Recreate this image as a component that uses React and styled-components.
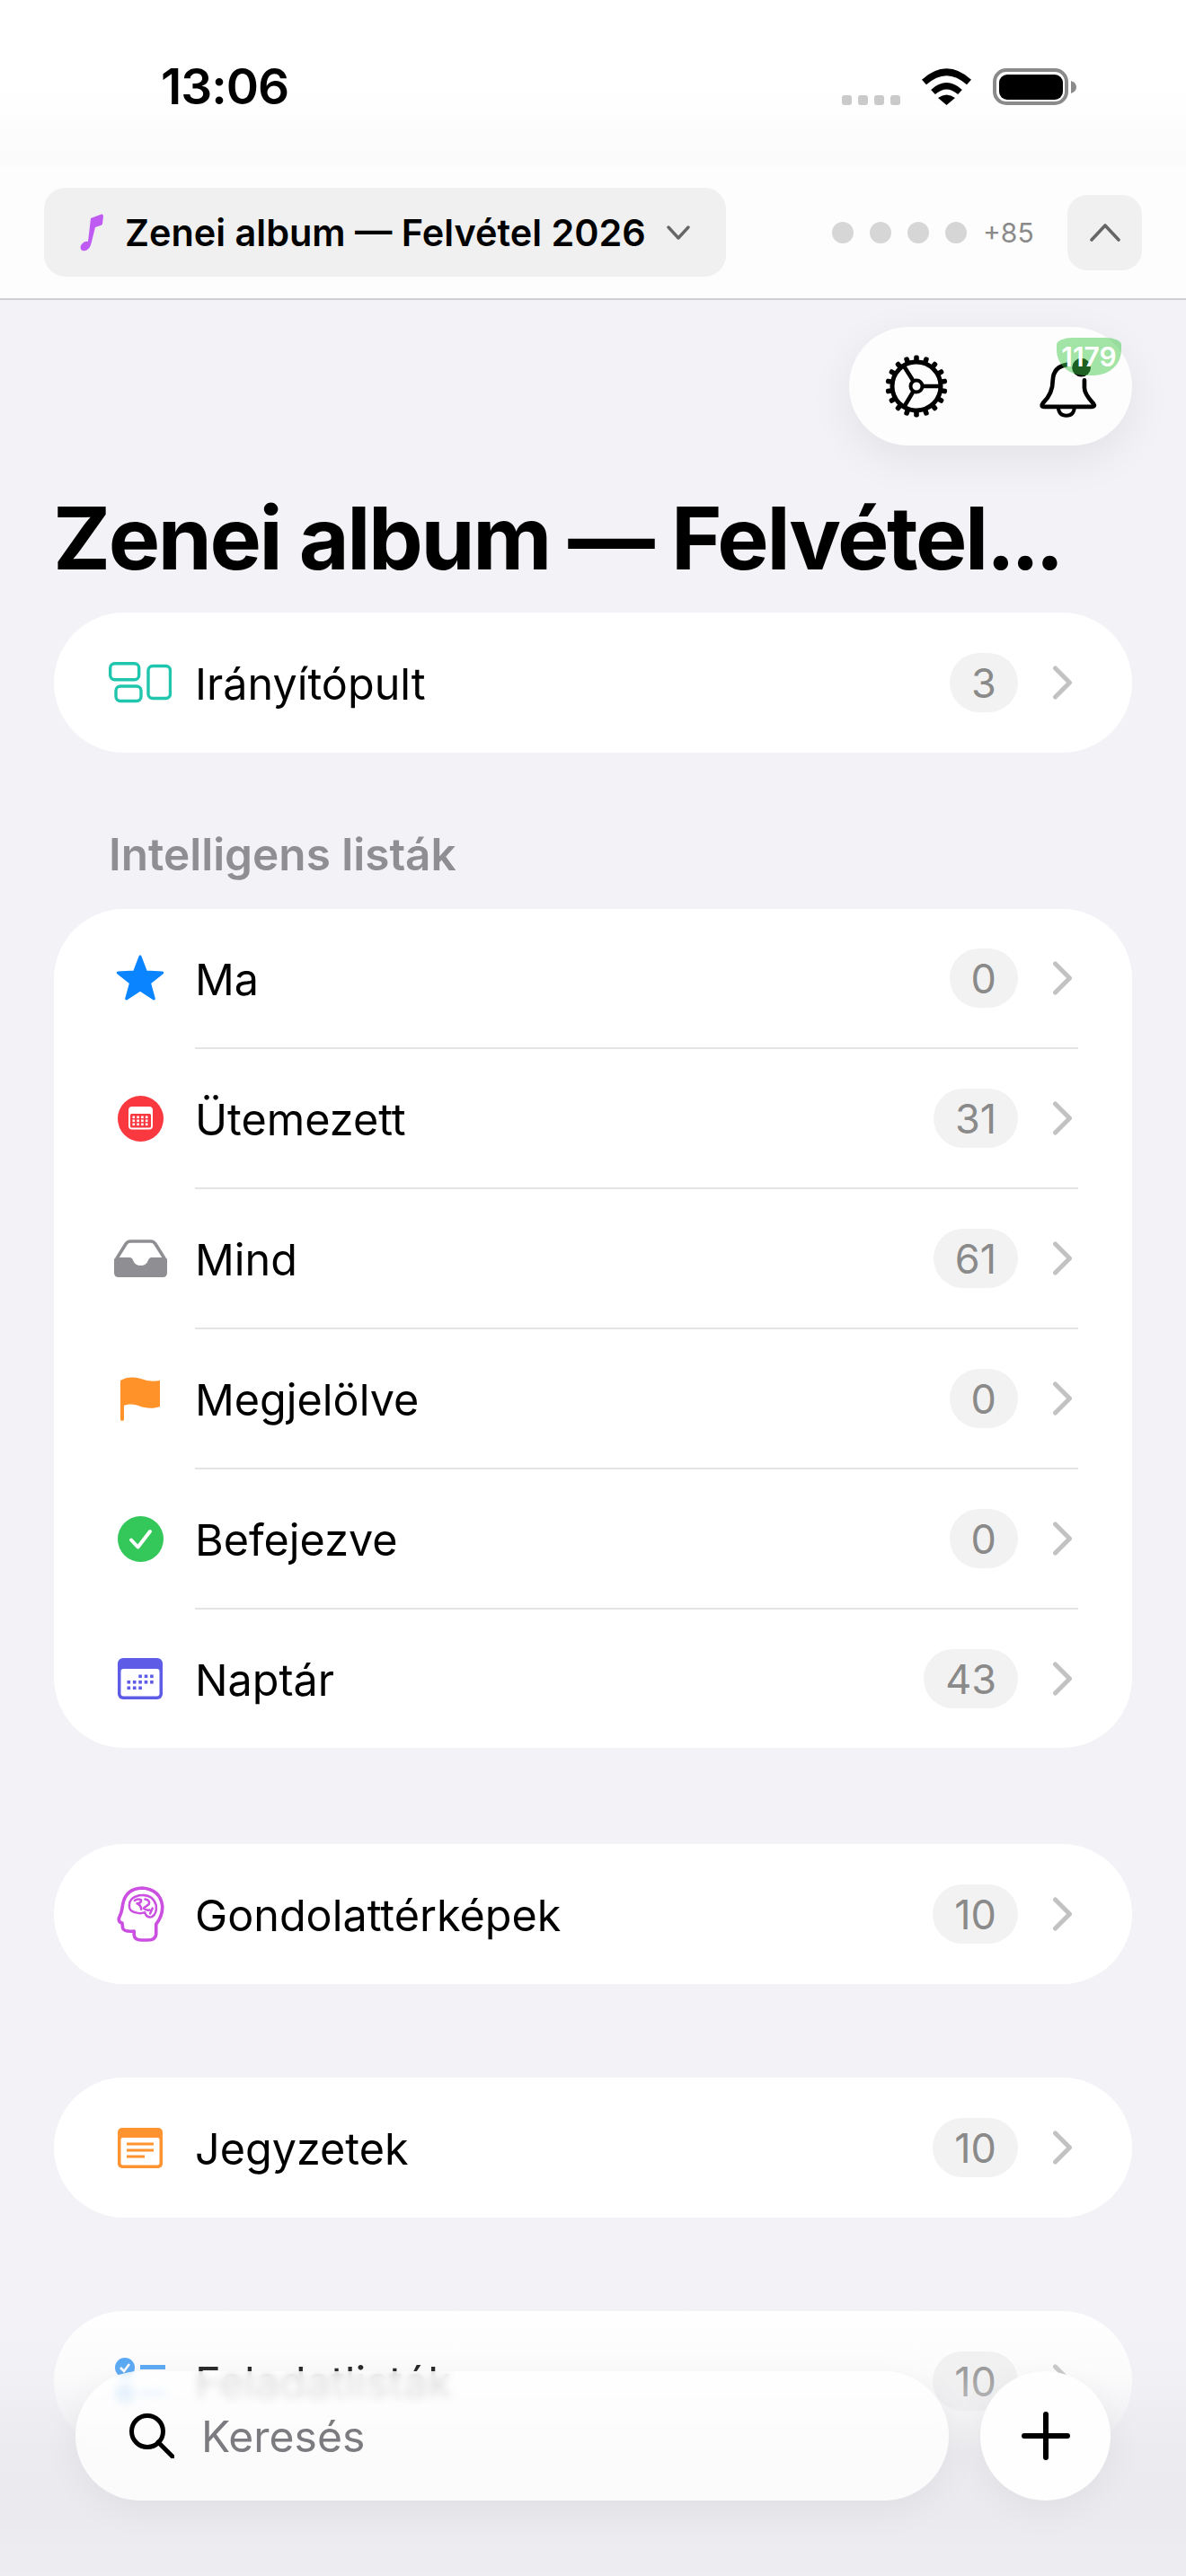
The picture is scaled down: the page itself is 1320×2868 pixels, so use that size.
import styled, { createGlobalStyle } from 'styled-components'

const GlobalStyle = createGlobalStyle`
html, body {
    margin: 0;
    padding: 0;
    background: #f2f2f7;
}
* {
    box-sizing: border-box;
}
`
const Page = styled.div`
position: relative;
width: 1320px;
height: 2868px;
overflow: hidden;
background: #f2f2f7;
font-family: Inter, "Liberation Sans", sans-serif;
color: #000;
`
const StatusBar = styled.div`
display: flex;
justify-content: space-between;
align-items: flex-start;
height: 185px;
padding: 76px 122px 0 179px;
background: linear-gradient(#ffffff, #ffffff 50%, #fbfbfb);
`
const Time = styled.div`
font-size: 55px;
line-height: 41px;
font-weight: 600;
letter-spacing: -1px;
`
const StatusIcons = styled.div`
display: flex;
align-items: flex-end;
gap: 23px;
height: 41px;
`
const Signal = styled.div`
display: flex;
gap: 7px;
`
const SignalDot = styled.span`
width: 11px;
height: 11px;
border-radius: 3px;
background: #cacaca;
`
const TopBar = styled.div`
display: flex;
justify-content: space-between;
align-items: center;
height: 149px;
padding: 0 49px 0 49px;
background: #fdfdfd;
border-bottom: 2px solid #cfcfd1;
`
const ProjectPicker = styled.div`
display: flex;
align-items: center;
width: 759px;
height: 99px;
padding-left: 40px;
border-radius: 24px;
background: #f0f0f0;
`
const ProjectName = styled.span`
margin-left: 24px;
font-size: 41.4px;
font-weight: 600;
white-space: nowrap;
`
const PickerChevron = styled.svg`
margin-left: 23px;
`
const TopRight = styled.div`
display: flex;
align-items: center;
`
const Avatar = styled.span`
width: 24px;
height: 24px;
margin-right: 18px;
border-radius: 50%;
background: #d6d6d6;
`
const MoreCount = styled.span`
width: 94px;
font-size: 30px;
color: #8a8a8a;
`
const CollapseButton = styled.div`
display: flex;
align-items: center;
justify-content: center;
width: 83px;
height: 84px;
border-radius: 22px;
background: #f0f0f0;
`
const Floating = styled.div`
position: absolute;
top: 364px;
right: 60px;
display: flex;
align-items: center;
justify-content: space-between;
width: 315px;
height: 132px;
padding: 0 38px 0 40px;
border-radius: 66px;
background: #fdfdfe;
box-shadow: 0 14px 50px rgba(0, 0, 0, 0.07);
`
const BellWrap = styled.div`
display: flex;
`
const Badge = styled.span`
position: absolute;
top: 12px;
right: 12px;
display: flex;
align-items: center;
justify-content: center;
width: 72px;
height: 42px;
border-radius: 18px 18px 30px 30px / 8px 8px 28px 28px;
background: rgba(60, 200, 70, 0.48);
color: #fff;
font-size: 30px;
font-weight: 600;
`
const Content = styled.div`
padding: 205px 60px 0;
`
const Title = styled.h1`
margin: 0 0 23px -1px;
font-size: 96.5px;
line-height: 120px;
font-weight: 700;
letter-spacing: -2.4px;
white-space: nowrap;
`
const TitleDots = styled.span`
letter-spacing: -5px;
`
const SectionLabel = styled.div`
margin: 83px 0 31px 61px;
font-size: 49.5px;
line-height: 60px;
font-weight: 600;
color: #8e8e93;
`
const Card = styled.div`
margin-top: ${p => p.$gap || 0}px;
padding: ${p => p.$single ? '1px' : '0'} 0;
border-radius: 78px;
background: #fff;
`
const Row = styled.div`
display: flex;
padding-left: 60px;
&:last-child > div:last-child {
    height: 154px;
    border-bottom: none;
}
`
const IconBox = styled.div`
display: flex;
align-items: center;
justify-content: center;
flex: none;
width: 72px;
height: 154px;
margin-right: 25px;
`
const RowBody = styled.div`
display: flex;
align-items: center;
flex: 1;
height: 156px;
margin-right: 60px;
padding-right: 7px;
border-bottom: 2px solid #e4e4e6;
`
const RowLabel = styled.span`
flex: 1;
padding-top: 2px;
font-size: 48.5px;
`
const Count = styled.span`
display: flex;
align-items: center;
justify-content: center;
min-width: 76px;
height: 66px;
padding: 0 24px;
border-radius: 33px;
background: #f2f2f2;
color: #8a8a8a;
font-size: 45px;
`
const RowChevron = styled.svg`
margin-left: 39px;
`
const Fade = styled.div`
position: absolute;
left: 0;
right: 0;
bottom: 0;
height: 300px;
background: linear-gradient(rgba(235, 235, 239, 0), rgba(235, 235, 239, 0.2) 25%, rgba(235, 235, 239, 0.6) 40%, rgba(235, 235, 239, 0.97) 55%, #ebebef 80%, #eeeef2);
`
const BottomBar = styled.div`
position: absolute;
left: 84px;
right: 84px;
bottom: 84px;
display: flex;
gap: 35px;
`
const SearchBar = styled.div`
display: flex;
align-items: center;
flex: 1;
height: 144px;
padding-left: 60px;
border-radius: 72px;
background: rgba(255, 255, 255, 0.8);
backdrop-filter: blur(5px);
box-shadow: 0 10px 40px rgba(0, 0, 0, 0.05);
`
const SearchText = styled.span`
margin-left: 30px;
font-size: 48px;
color: #7b7b80;
`
const AddButton = styled.div`
display: flex;
align-items: center;
justify-content: center;
flex: none;
width: 145px;
height: 144px;
border-radius: 50%;
background: #fefefe;
box-shadow: 0 10px 40px rgba(0, 0, 0, 0.05);
`

function starPoints(cx, cy, outer, inner) {
    const pts = []
    for (let i = 0; i < 10; i++) {
        const r = i % 2 ? inner : outer
        const a = -Math.PI / 2 + i * Math.PI / 5
        pts.push((cx + r * Math.cos(a)).toFixed(1) + ',' + (cy + r * Math.sin(a)).toFixed(1))
    }
    return pts.join(' ')
}

const Wifi = () => (
    <svg width="57" height="41" viewBox="0 0 57 41">
        <path d="M3.5 15.5 Q28.5 -7 53.5 15.5" fill="none" stroke="#000" strokeWidth="7.5" />
        <path d="M13.5 26.5 Q28.5 13 43.5 26.5" fill="none" stroke="#000" strokeWidth="7" />
        <path d="M19 33 Q28.5 26 38 33 L28.5 41 Z" fill="#000" />
    </svg>
)
const Battery = () => (
    <svg width="93" height="41" viewBox="0 0 93 41">
        <rect x="2" y="2" width="80" height="37" rx="13" fill="none" stroke="#8a8a8a" strokeWidth="4" />
        <rect x="7" y="7" width="71" height="28" rx="9" fill="#000" />
        <path d="M87 14 Q93 16 93 21 Q93 26 87 28 Z" fill="#8a8a8a" />
    </svg>
)
const MusicNote = () => (
    <svg width="26" height="42" viewBox="0 0 26 42">
        <path d="M12 5 L24 0.5 Q26 0 26 3 L25 11 Q25 12.5 23 13 L17 15 L12.5 33 C11 39 7 42 3 41 C0 40 0 36 2 34 C4 31 7 30.5 9 31 Z" fill="#bf5af2" />
    </svg>
)
const Gear = () => {
    const teeth = Array.from({ length: 18 }, (_, i) => i * 20)
    return (
        <svg width="70" height="70" viewBox="0 0 70 70">
            {teeth.map(a => (
                <rect key={a} x="32.2" y="0.5" width="5.6" height="10" rx="2.2" fill="#000" transform={`rotate(${a} 35 35)`} />
            ))}
            <circle cx="35" cy="35" r="27" fill="#fdfdfe" stroke="#000" strokeWidth="5" />
            <path d="M41 35 H62 M32 30 L20 11 M32 40 L20 60" stroke="#000" strokeWidth="4.5" fill="none" />
            <circle cx="35" cy="35" r="6.5" fill="#fdfdfe" stroke="#000" strokeWidth="4" />
        </svg>
    )
}
const Bell = () => (
    <svg width="67" height="74" viewBox="770 160 200 220">
        <path d="M925 250 V275 Q925 295 955 328 Q962 338 950 338 H792 Q778 338 788 325 Q820 295 820 250 Q822 205 868 198" fill="none" stroke="#000" strokeWidth="14" strokeLinecap="round" strokeLinejoin="round" />
        <path d="M838 340 Q840 368 865 368 Q890 368 892 340" fill="none" stroke="#000" strokeWidth="12" />
        <circle cx="915" cy="208" r="31" fill="#000" />
    </svg>
)
const Dashboard = () => (
    <svg width="70" height="46" viewBox="0 0 70 46" fill="none" stroke="#1fc5ad" strokeWidth="3.4">
        <rect x="1.7" y="1.7" width="32" height="18" rx="5" />
        <rect x="8" y="27" width="28" height="16.5" rx="5" />
        <rect x="44" y="4.5" width="24.5" height="36" rx="5" />
    </svg>
)
const Star = () => (
    <svg width="56" height="54" viewBox="0 0 56 54">
        <polygon points={starPoints(28, 29, 26, 11)} fill="#0a84ff" stroke="#0a84ff" strokeWidth="3" strokeLinejoin="round" />
    </svg>
)
const Scheduled = () => {
    const dots = []
    for (let y = 0; y < 3; y++) {
        for (let x = 0; x < 4; x++) {
            dots.push(<rect key={x + '-' + y} x={16.5 + x * 4.8} y={22.5 + y * 4} width="2.6" height="2.6" fill="#fff" />)
        }
    }
    return (
        <svg width="51" height="51" viewBox="0 0 51 51">
            <circle cx="25.5" cy="25.5" r="25.5" fill="#f9383f" />
            <rect x="12" y="12" width="27" height="25.5" rx="4" fill="#fff" />
            <rect x="14" y="20" width="23" height="15.5" rx="1.5" fill="#f9383f" />
            {dots}
        </svg>
    )
}
const Inbox = () => (
    <svg width="59" height="42" viewBox="0 0 59 42">
        <path d="M3 21 L13 5 Q15 2 18 2 H41 Q44 2 46 5 L56 21" fill="none" stroke="#8e8e93" strokeWidth="3.6" />
        <path d="M0 23 Q0 20 3 20 H17 Q20 20 21 23 a9 9 0 0 0 17 0 Q39 20 42 20 H56 Q59 20 59 23 V37 Q59 42 54 42 H5 Q0 42 0 37 Z" fill="#8e8e93" />
    </svg>
)
const Flag = () => (
    <svg width="44" height="49" viewBox="0 0 44 49">
        <path d="M0 4 C8 -1 18 0 26 3 C32 5 38 5 44 4 V33 C36 36 28 35 20 32 C14 30 8 30 4 32 V47 a2 2 0 0 1 -4 0 Z" fill="#ff9229" />
    </svg>
)
const Done = () => (
    <svg width="51" height="51" viewBox="0 0 51 51">
        <circle cx="25.5" cy="25.5" r="25.5" fill="#34c759" />
        <path d="M15 26.5 L22.5 34.5 L36 17" fill="none" stroke="#fff" strokeWidth="4" strokeLinecap="round" strokeLinejoin="round" />
    </svg>
)
const CalendarIcon = () => {
    const dots = []
    for (let y = 0; y < 3; y++) {
        for (let x = 0; x < 5; x++) {
            if ((y === 0 && x < 2) || (y === 2 && x > 2)) continue
            dots.push(<rect key={x + '-' + y} x={10.5 + x * 6.4} y={18.5 + y * 6.5} width="3.6" height="3.6" fill="#5e5ce6" />)
        }
    }
    return (
        <svg width="50" height="46" viewBox="0 0 50 46">
            <rect width="50" height="46" rx="6" fill="#5e5ce6" />
            <rect x="3.5" y="12" width="43" height="30.5" rx="3" fill="#fff" />
            {dots}
        </svg>
    )
}
const BrainHead = () => (
    <svg width="53" height="62" viewBox="30 45 160 185" fill="none" stroke="#cb4fe0" strokeLinecap="round" strokeLinejoin="round">
        <path strokeWidth="11" d="M88 195 V208 Q90 225 112 225 H135 Q160 225 162 205 V172 Q185 142 183 110 Q176 55 115 50 Q60 52 50 105 Q48 122 44 135 L37 152 Q35 164 48 168 L50 185 Q54 198 88 195" />
        <path strokeWidth="7.5" d="M92 132 Q70 128 72 108 Q72 82 105 75 Q150 68 162 108 Q166 135 148 147 Q130 152 124 132 Q108 138 92 132 M90 92 Q100 84 112 90 Q112 102 98 102 M98 102 Q112 108 112 122 M125 88 Q142 90 138 104 L120 118 Q128 126 140 124 M150 118 L142 136" />
    </svg>
)
const Notes = () => (
    <svg width="50" height="45" viewBox="0 0 50 45">
        <rect width="50" height="45" rx="5" fill="#ff9330" />
        <rect x="3.5" y="11" width="43" height="30.5" rx="2" fill="#fff" />
        <path d="M10 18 H40 M10 25 H40 M10 32 H30" stroke="#ff9330" strokeWidth="3" />
    </svg>
)
const Tasks = () => (
    <svg width="56" height="52" viewBox="0 0 56 52">
        <circle cx="11" cy="11" r="11" fill="#3f9cf5" />
        <path d="M6 11 L10 15 L16 7" fill="none" stroke="#fff" strokeWidth="2.6" />
        <rect x="28" y="8" width="28" height="5" fill="#3f9cf5" />
        <circle cx="11" cy="40" r="11" fill="#3f9cf5" />
        <rect x="28" y="37" width="28" height="5" fill="#3f9cf5" />
    </svg>
)

function ListRow({ icon, label, count }) {
    return (
        <Row>
            <IconBox>{icon}</IconBox>
            <RowBody>
                <RowLabel>{label}</RowLabel>
                <Count>{count}</Count>
                <RowChevron width="21" height="38" viewBox="0 0 21 38" fill="none" stroke="#c2c2c2" strokeWidth="5" strokeLinecap="round" strokeLinejoin="round">
                    <path d="M2.5 3 L18.5 19 L2.5 35" />
                </RowChevron>
            </RowBody>
        </Row>
    )
}

const smartLists = [
    { icon: <Star />, label: 'Ma', count: 0 },
    { icon: <Scheduled />, label: 'Ütemezett', count: 31 },
    { icon: <Inbox />, label: 'Mind', count: 61 },
    { icon: <Flag />, label: 'Megjelölve', count: 0 },
    { icon: <Done />, label: 'Befejezve', count: 0 },
    { icon: <CalendarIcon />, label: 'Naptár', count: 43 },
]

export default function App() {
    return (
        <Page>
            <GlobalStyle />
            <StatusBar>
                <Time>13:06</Time>
                <StatusIcons>
                    <Signal>
                        <SignalDot /><SignalDot /><SignalDot /><SignalDot />
                    </Signal>
                    <Wifi />
                    <Battery />
                </StatusIcons>
            </StatusBar>
            <TopBar>
                <ProjectPicker>
                    <MusicNote />
                    <ProjectName>Zenei album — Felvétel 2026</ProjectName>
                    <PickerChevron width="26" height="16" viewBox="0 0 26 16" fill="none" stroke="#666" strokeWidth="3.4" strokeLinecap="round" strokeLinejoin="round">
                        <path d="M2 2 L13 14 L24 2" />
                    </PickerChevron>
                </ProjectPicker>
                <TopRight>
                    <Avatar /><Avatar /><Avatar /><Avatar />
                    <MoreCount>+85</MoreCount>
                    <CollapseButton>
                        <svg width="34" height="20" viewBox="0 0 34 20" fill="none" stroke="#666" strokeWidth="3.6" strokeLinecap="round" strokeLinejoin="round">
                            <path d="M2 18 L17 2 L32 18" />
                        </svg>
                    </CollapseButton>
                </TopRight>
            </TopBar>
            <Content>
                <Title>Zenei album — Felvétel<TitleDots>...</TitleDots></Title>
                <Card $single>
                    <ListRow icon={<Dashboard />} label="Irányítópult" count={3} />
                </Card>
                <SectionLabel>Intelligens listák</SectionLabel>
                <Card>
                    {smartLists.map(item => (
                        <ListRow key={item.label} icon={item.icon} label={item.label} count={item.count} />
                    ))}
                </Card>
                <Card $single $gap={107}>
                    <ListRow icon={<BrainHead />} label="Gondolattérképek" count={10} />
                </Card>
                <Card $single $gap={104}>
                    <ListRow icon={<Notes />} label="Jegyzetek" count={10} />
                </Card>
                <Card $single $gap={104}>
                    <ListRow icon={<Tasks />} label="Feladatlisták" count={10} />
                </Card>
            </Content>
            <Floating>
                <Gear />
                <BellWrap><Bell /></BellWrap>
                <Badge>1179</Badge>
            </Floating>
            <Fade />
            <BottomBar>
                <SearchBar>
                    <svg width="50" height="50" viewBox="0 0 50 50" fill="none" stroke="#000" strokeWidth="5">
                        <circle cx="20" cy="20" r="17.5" />
                        <path d="M32 32 L48 48" strokeLinecap="round" />
                    </svg>
                    <SearchText>Keresés</SearchText>
                </SearchBar>
                <AddButton>
                    <svg width="54" height="54" viewBox="0 0 54 54" fill="none" stroke="#000" strokeWidth="6" strokeLinecap="round">
                        <path d="M27 3 V51 M3 27 H51" />
                    </svg>
                </AddButton>
            </BottomBar>
        </Page>
    )
}
